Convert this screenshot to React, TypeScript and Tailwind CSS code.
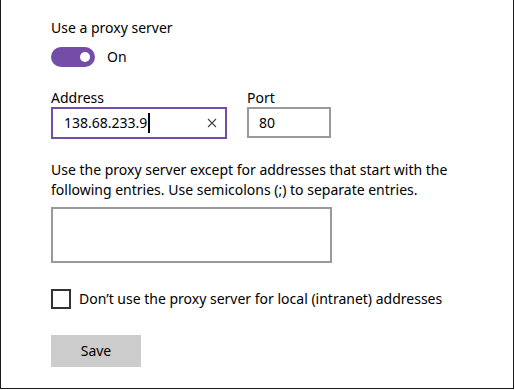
import React from "react";

export default function App() {
  const font = { fontFamily: '"Noto Sans", "Open Sans", sans-serif' };
  return (
    <div className="w-[515px] h-[390px] bg-white">
      <div
        className="w-[514px] h-[389px] border-l border-r border-b border-[#1a1a1a] pl-[50px] pt-[18px] text-[14px] leading-[20px] text-black"
        style={font}
      >
        <div>Use a proxy server</div>
        <div className="mt-[9px] flex items-center gap-3">
          <div className="w-[44px] h-[20px] rounded-full bg-[#744da9] flex items-center justify-end pr-[5px]">
            <div className="w-[10px] h-[10px] rounded-full bg-white" />
          </div>
          <span>On</span>
        </div>
        <div className="mt-[22px] flex gap-5">
          <div className="flex flex-col">
            <span className="leading-[18px]">Address</span>
            <div className="w-[176px] h-[32px] border-2 border-[#744da9] flex items-center pl-[11px] pr-[8px]">
              <span>138.68.233.9</span>
              <span className="w-[2px] h-[20px] bg-black ml-[1px]" />
              <span className="ml-auto flex items-center">
                <svg width="10" height="10" viewBox="0 0 10 10">
                  <path d="M1 1L9 9M9 1L1 9" stroke="#444" strokeWidth="1.1" />
                </svg>
              </span>
            </div>
          </div>
          <div className="flex flex-col">
            <span className="leading-[18px]">Port</span>
            <div className="w-[84px] h-[31px] border-2 border-[#999999] flex items-center pl-[10px]">
              80
            </div>
          </div>
        </div>
        <p className="mt-[21px] w-[410px]">
          Use the proxy server except for addresses that start with the following entries. Use semicolons (;) to separate entries.
        </p>
        <div className="mt-[7px] w-[281px] h-[56px] border-2 border-[#999999]" />
        <div className="mt-[26px] flex items-center gap-2">
          <div className="w-[20px] h-[20px] border-2 border-[#333333]" />
          <span>Don’t use the proxy server for local (intranet) addresses</span>
        </div>
        <div className="mt-[26px] w-[90px] h-[32px] bg-[#cccccc] flex items-center justify-center">
          Save
        </div>
      </div>
    </div>
  );
}
